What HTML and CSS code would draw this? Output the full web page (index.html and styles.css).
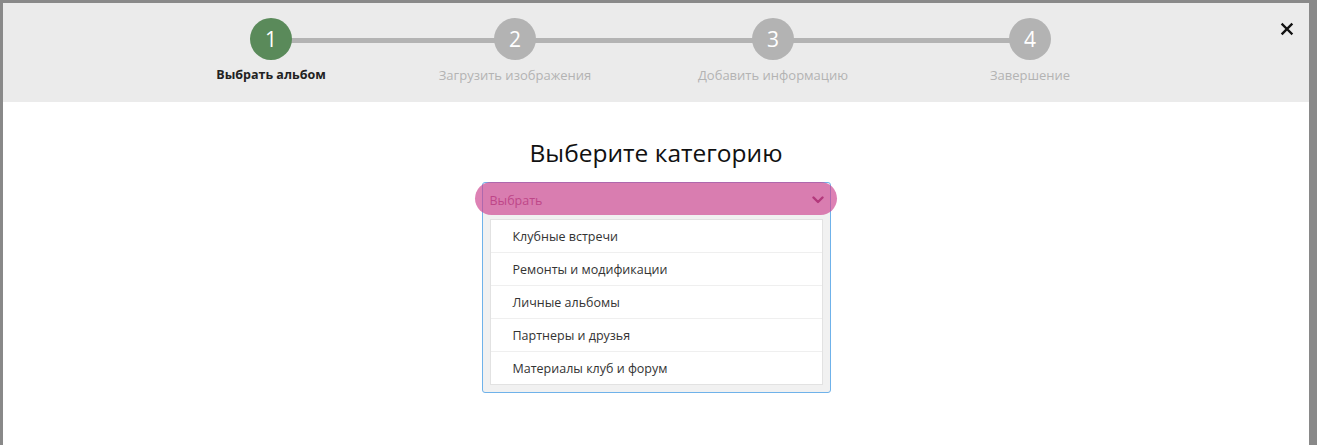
FILE: index.html
```html
<!DOCTYPE html>
<html lang="ru">
<head>
<meta charset="utf-8">
<title>Выберите категорию</title>
<link rel="stylesheet" href="styles.css">
</head>
<body>
<div class="modal">
  <div class="modal-head">
    <div class="steps">
      <div class="step active"><div class="circle">1</div><div class="label">Выбрать альбом</div></div>
      <div class="step"><div class="circle">2</div><div class="label">Загрузить изображения</div></div>
      <div class="step"><div class="circle">3</div><div class="label">Добавить информацию</div></div>
      <div class="step"><div class="circle">4</div><div class="label">Завершение</div></div>
    </div>
    <button class="close" type="button" aria-label="Закрыть">
      <svg width="14" height="14" viewBox="0 0 14 14"><path d="M2.5 2.5 L11.5 11.5 M11.5 2.5 L2.5 11.5" stroke="#111" stroke-width="2.4" stroke-linecap="square"/></svg>
    </button>
  </div>
  <div class="modal-body">
    <h1 class="title">Выберите категорию</h1>
    <div class="dropdown">
      <div class="select">
        <span class="placeholder">Выбрать</span>
        <svg class="chev" width="12" height="8" viewBox="0 0 12 8"><path d="M1.5 1.5 L6 6 L10.5 1.5" fill="none" stroke="#7d1f52" stroke-width="2.4" stroke-linecap="round" stroke-linejoin="round"/></svg>
      </div>
      <ul class="options">
        <li>Клубные встречи</li>
        <li>Ремонты и модификации</li>
        <li>Личные альбомы</li>
        <li>Партнеры и друзья</li>
        <li>Материалы клуб и форум</li>
      </ul>
      <div class="highlight"></div>
    </div>
  </div>
</div>
</body>
</html>
```

FILE: styles.css
```css
html, body {
  margin: 0;
  padding: 0;
  height: 100%;
}
* {
  box-sizing: border-box;
}
body {
  background: #898989;
  font-family: "Open Sans", "DejaVu Sans", sans-serif;
  overflow: hidden;
}
.modal {
  margin: 3px 8px 0 3px;
  background: #fff;
  height: calc(100% - 3px);
}
.modal-head {
  position: relative;
  background: #ebebeb;
  height: 99px;
}
.steps {
  position: relative;
  display: grid;
  grid-template-columns: 244px 244px 272px 242px;
  padding-left: 146px;
  padding-top: 15px;
}
.steps::before {
  content: "";
  position: absolute;
  left: 268px;
  width: 759px;
  top: 35px;
  height: 5px;
  background: #b3b3b3;
}
.step {
  display: flex;
  flex-direction: column;
  align-items: center;
  position: relative;
}
.circle {
  width: 42px;
  height: 42px;
  border-radius: 50%;
  background: #b3b3b3;
  color: #fff;
  font-size: 21px;
  line-height: 42px;
  text-align: center;
}
.step.active .circle {
  background: #5a8a5a;
}
.label {
  margin-top: 7px;
  font-size: 13px;
  line-height: 16px;
  color: #b3b3b3;
  white-space: nowrap;
}
.step.active .label {
  font-size: 12.5px;
  color: #222;
  font-weight: 700;
}
.close {
  position: absolute;
  right: 15px;
  top: 19px;
  border: 0;
  background: none;
  padding: 0;
  width: 14px;
  height: 14px;
  display: block;
}
.close svg {
  display: block;
}
.modal-body {
  display: flex;
  flex-direction: column;
  align-items: center;
  padding-top: 34px;
}
.title {
  margin: 0;
  font-size: 24.5px;
  line-height: 34px;
  font-weight: 400;
  color: #111;
}
.dropdown {
  position: relative;
  margin-top: 12px;
  width: 349px;
  border: 1px solid #6fb2ea;
  border-radius: 3px;
  background: #f1f1f1;
  padding: 0 7px 7px 7px;
}
.select {
  display: flex;
  align-items: center;
  justify-content: space-between;
  height: 36px;
  padding: 0 0 2px 0;
}
.chev {
  margin-right: -1px;
}
.placeholder {
  font-size: 12.5px;
  color: #a04877;
}
.options {
  list-style: none;
  margin: 0;
  padding: 0;
  background: #fff;
  border: 1px solid #e2e2e2;
}
.options li {
  height: 33px;
  line-height: 34px;
  padding-left: 22px;
  font-size: 12.5px;
  color: #333;
  border-top: 1px solid #efefef;
}
.options li:first-child {
  border-top: 0;
  height: 32px;
  line-height: 33px;
}
.highlight {
  position: absolute;
  left: -8px;
  right: -7px;
  top: -1px;
  height: 33px;
  border-radius: 17px;
  background: rgba(205, 70, 145, 0.68);
  pointer-events: none;
}
```
